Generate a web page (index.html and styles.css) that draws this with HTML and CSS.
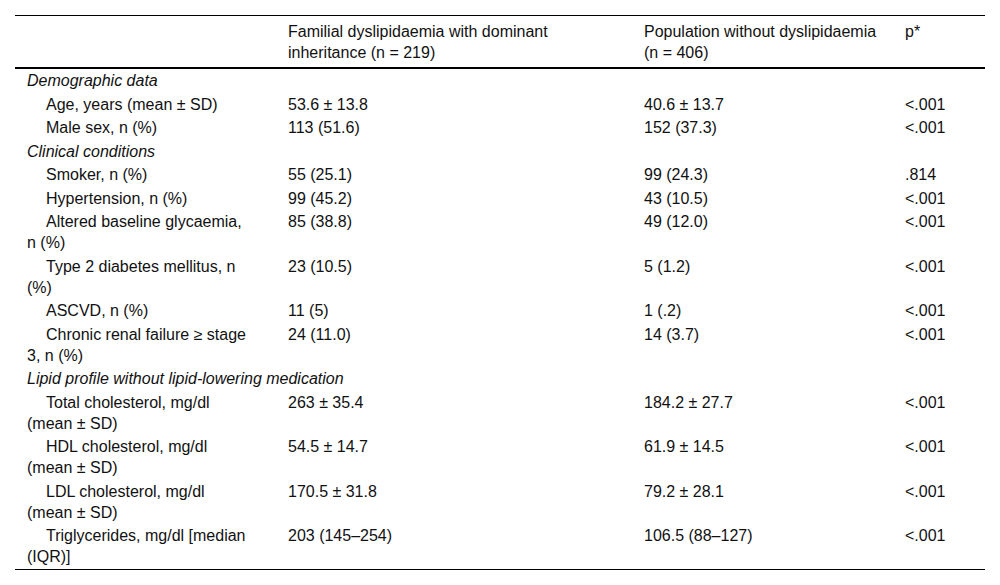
FILE: index.html
```html
<!DOCTYPE html>
<html lang="en">
<head>
<meta charset="utf-8">
<title>Table</title>
<link rel="stylesheet" href="styles.css">
</head>
<body>
<table class="data-table">
  <colgroup>
    <col class="c1">
    <col class="c2">
    <col class="c3">
    <col class="c4">
  </colgroup>
  <thead>
    <tr>
      <th class="first"></th>
      <th>Familial dyslipidaemia with dominant inheritance (n = 219)</th>
      <th class="third">Population without dyslipidaemia (n = 406)</th>
      <th>p*</th>
    </tr>
  </thead>
  <tbody>
    <tr><td class="first section" colspan="4">Demographic data</td></tr>
    <tr><td class="first item">Age, years (mean ± SD)</td><td>53.6 ± 13.8</td><td>40.6 ± 13.7</td><td>&lt;.001</td></tr>
    <tr><td class="first item">Male sex, n (%)</td><td>113 (51.6)</td><td>152 (37.3)</td><td>&lt;.001</td></tr>
    <tr><td class="first section" colspan="4">Clinical conditions</td></tr>
    <tr><td class="first item">Smoker, n (%)</td><td>55 (25.1)</td><td>99 (24.3)</td><td>.814</td></tr>
    <tr><td class="first item">Hypertension, n (%)</td><td>99 (45.2)</td><td>43 (10.5)</td><td>&lt;.001</td></tr>
    <tr><td class="first item">Altered baseline glycaemia, n (%)</td><td>85 (38.8)</td><td>49 (12.0)</td><td>&lt;.001</td></tr>
    <tr><td class="first item">Type 2 diabetes mellitus, n (%)</td><td>23 (10.5)</td><td>5 (1.2)</td><td>&lt;.001</td></tr>
    <tr><td class="first item">ASCVD, n (%)</td><td>11 (5)</td><td>1 (.2)</td><td>&lt;.001</td></tr>
    <tr><td class="first item">Chronic renal failure ≥ stage 3, n (%)</td><td>24 (11.0)</td><td>14 (3.7)</td><td>&lt;.001</td></tr>
    <tr><td class="first section" colspan="4">Lipid profile without lipid-lowering medication</td></tr>
    <tr><td class="first item">Total cholesterol, mg/dl (mean ± SD)</td><td>263 ± 35.4</td><td>184.2 ± 27.7</td><td>&lt;.001</td></tr>
    <tr><td class="first item">HDL cholesterol, mg/dl (mean ± SD)</td><td>54.5 ± 14.7</td><td>61.9 ± 14.5</td><td>&lt;.001</td></tr>
    <tr><td class="first item">LDL cholesterol, mg/dl (mean ± SD)</td><td>170.5 ± 31.8</td><td>79.2 ± 28.1</td><td>&lt;.001</td></tr>
    <tr><td class="first item">Triglycerides, mg/dl [median (IQR)]</td><td>203 (145–254)</td><td>106.5 (88–127)</td><td>&lt;.001</td></tr>
  </tbody>
</table>
</body>
</html>
```

FILE: styles.css
```css
html, body {
  margin: 0;
  padding: 0;
  background: #ffffff;
}

body {
  font-family: "Liberation Sans", Arial, sans-serif;
  font-size: 16px;
  line-height: 21px;
  color: #111;
}

.data-table {
  margin: 15px 0 0 15px;
  width: 970px;
  border-collapse: collapse;
  table-layout: fixed;
}

.c1 { width: 261px; }
.c2 { width: 356px; }
.c3 { width: 261px; }
.c4 { width: 92px; }

.data-table th {
  font-weight: normal;
  text-align: left;
  vertical-align: top;
  padding: 4.5px 24px 4.5px 12px;
}

.data-table th.third {
  padding-right: 12px;
}

.data-table thead tr {
  border-top: 1px solid #000;
  border-bottom: 2px solid #000;
}

.data-table tbody tr:last-child {
  border-bottom: 1px solid #000;
}

.data-table td {
  vertical-align: top;
  padding: 1.25px 24px 1.25px 12px;
}

.data-table td.first {
  padding-right: 26px;
}

.data-table td.section {
  font-style: italic;
}

.data-table td.item {
  text-indent: 19px;
}
```
